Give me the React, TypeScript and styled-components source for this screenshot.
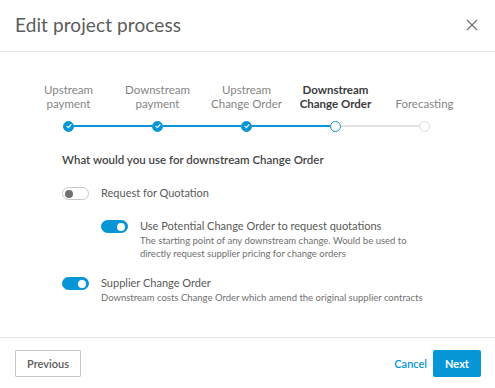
import React from "react";
import styled, { createGlobalStyle } from "styled-components";

const Global = createGlobalStyle`
  html, body { margin: 0; padding: 0; background: #fff; }
  body { font-family: Lato, "Noto Sans", sans-serif; color: #3c3c3c; }
  * { box-sizing: border-box; }
`;

const BLUE = "#0696d7";

const Dialog = styled.div`
  width: 495px;
  height: 388px;
  display: flex;
  flex-direction: column;
  background: #fff;
`;

const Header = styled.div`
  height: 52px;
  display: flex;
  align-items: center;
  justify-content: space-between;
  padding: 0 16px 2px 15px;
  border-bottom: 1px solid #e2e2e2;
`;

const Title = styled.h1`
  margin: 0;
  font-size: 19px;
  font-weight: 400;
  color: #5c5c5c;
  letter-spacing: 0.1px;
`;

const Close = styled.button`
  border: 0;
  background: none;
  padding: 0;
  width: 14px;
  height: 14px;
  display: flex;
  cursor: pointer;
`;

const Body = styled.div`
  flex: 1;
  padding: 31px 0 0 0;
`;

const Stepper = styled.div`
  display: grid;
  grid-template-columns: repeat(5, 89px);
  padding-left: 24px;
`;

const Step = styled.div`
  display: flex;
  flex-direction: column;
  align-items: center;
`;

const StepLabel = styled.div<{ $active?: boolean }>`
  font-size: 11.5px;
  line-height: 14px;
  text-align: center;
  height: 28px;
  display: flex;
  align-items: flex-end;
  color: ${(p) => (p.$active ? "#3c3c3c" : "#858585")};
  font-weight: ${(p) => (p.$active ? 700 : 400)};
`;

const Track = styled.div`
  margin-top: 9px;
  width: 100%;
  height: 12px;
  display: flex;
  align-items: center;
`;

const Half = styled.div<{ $color: string }>`
  flex: 1;
  height: 1.5px;
  background: ${(p) => p.$color};
`;

const Dot = styled.div<{ $state: "done" | "current" | "todo" }>`
  width: 11px;
  height: 11px;
  border-radius: 50%;
  flex: none;
  display: flex;
  align-items: center;
  justify-content: center;
  background: ${(p) => (p.$state === "done" ? BLUE : "#fff")};
  border: 1.5px solid
    ${(p) => (p.$state === "todo" ? "#dcdcdc" : BLUE)};
`;

const Question = styled.div`
  margin: 21px 0 0 62px;
  font-size: 11.5px;
  font-weight: 600;
  color: #454545;
`;

const Options = styled.div`
  margin-top: 20px;
  display: flex;
  flex-direction: column;
`;

const OptionRow = styled.div<{ $indent?: boolean; $gap?: number }>`
  display: flex;
  align-items: flex-start;
  gap: 12px;
  padding-left: ${(p) => (p.$indent ? 101 : 62)}px;
  margin-top: ${(p) => p.$gap ?? 0}px;
`;

const Toggle = styled.div<{ $on?: boolean }>`
  width: 27px;
  height: 13px;
  border-radius: 7px;
  flex: none;
  margin-top: 1px;
  display: flex;
  align-items: center;
  padding: 0 2px;
  justify-content: ${(p) => (p.$on ? "flex-end" : "flex-start")};
  background: ${(p) => (p.$on ? BLUE : "#fff")};
  border: 1px solid ${(p) => (p.$on ? BLUE : "#c8c8c8")};
  &::after {
    content: "";
    width: 8px;
    height: 8px;
    border-radius: 50%;
    background: ${(p) => (p.$on ? "#fff" : "#707070")};
  }
`;

const OptionText = styled.div`
  display: flex;
  flex-direction: column;
`;

const OptionLabel = styled.div`
  font-size: 11px;
  line-height: 14px;
  color: #5a5a5a;
`;

const OptionDesc = styled.div<{ $wide?: boolean }>`
  font-size: 9.5px;
  line-height: 13px;
  color: #707070;
  margin-top: 1px;
  max-width: ${(p) => (p.$wide ? "none" : "290px")};
`;

const Footer = styled.div`
  height: 51px;
  border-top: 1px solid #e2e2e2;
  display: flex;
  align-items: center;
  justify-content: space-between;
  padding: 0 14px 0 15px;
`;

const Right = styled.div`
  display: flex;
  align-items: center;
  gap: 6px;
`;

const OutlineButton = styled.button`
  height: 27px;
  width: 66px;
  padding: 0;
  border: 1px solid #c8c8c8;
  background: #fff;
  color: #5a5a5a;
  font-family: inherit;
  font-size: 11px;
  font-weight: 600;
  border-radius: 1px;
`;

const LinkButton = styled.button`
  border: 0;
  background: none;
  padding: 0;
  color: ${BLUE};
  font-family: inherit;
  font-size: 11px;
  font-weight: 600;
`;

const PrimaryButton = styled.button`
  height: 27px;
  width: 48px;
  padding: 0;
  border: 0;
  background: ${BLUE};
  color: #fff;
  font-family: inherit;
  font-size: 11px;
  font-weight: 700;
  border-radius: 2px;
`;

const steps: { label: [string, string]; state: "done" | "current" | "todo" }[] = [
  { label: ["Upstream", "payment"], state: "done" },
  { label: ["Downstream", "payment"], state: "done" },
  { label: ["Upstream", "Change Order"], state: "done" },
  { label: ["Downstream", "Change Order"], state: "current" },
  { label: ["", "Forecasting"], state: "todo" },
];

const Check = () => (
  <svg width="6" height="6" viewBox="0 0 6 6">
    <path d="M1 3.4 L2.4 4.6 L5 1.6" stroke="#fff" strokeWidth="1.2" fill="none" strokeLinecap="round" strokeLinejoin="round" />
  </svg>
);

export default function App() {
  return (
    <Dialog>
      <Global />
      <Header>
        <Title>Edit project process</Title>
        <Close aria-label="Close">
          <svg width="14" height="14" viewBox="0 0 14 14">
            <path d="M2 2 L12 12 M12 2 L2 12" stroke="#777" strokeWidth="1.3" />
          </svg>
        </Close>
      </Header>
      <Body>
        <Stepper>
          {steps.map((s, i) => {
            const leftColor = i === 0 ? "transparent" : s.state === "todo" ? "#e2e2e2" : BLUE;
            const next = steps[i + 1];
            const rightColor = !next ? "transparent" : next.state === "todo" ? "#e2e2e2" : BLUE;
            return (
              <Step key={i}>
                <StepLabel $active={s.state === "current"}>
                  {s.label[0] ? (
                    <span>
                      {s.label[0]}
                      <br />
                      {s.label[1]}
                    </span>
                  ) : (
                    <span>{s.label[1]}</span>
                  )}
                </StepLabel>
                <Track>
                  <Half $color={leftColor} />
                  <Dot $state={s.state}>{s.state === "done" && <Check />}</Dot>
                  <Half $color={rightColor} />
                </Track>
              </Step>
            );
          })}
        </Stepper>
        <Question>What would you use for downstream Change Order</Question>
        <Options>
          <OptionRow>
            <Toggle />
            <OptionText>
              <OptionLabel>Request for Quotation</OptionLabel>
            </OptionText>
          </OptionRow>
          <OptionRow $indent $gap={19}>
            <Toggle $on />
            <OptionText>
              <OptionLabel>Use Potential Change Order to request quotations</OptionLabel>
              <OptionDesc>
                The starting point of any downstream change. Would be used to directly request supplier
                pricing for change orders
              </OptionDesc>
            </OptionText>
          </OptionRow>
          <OptionRow $gap={16}>
            <Toggle $on />
            <OptionText>
              <OptionLabel>Supplier Change Order</OptionLabel>
              <OptionDesc $wide>
                Downstream costs Change Order which amend the original supplier contracts
              </OptionDesc>
            </OptionText>
          </OptionRow>
        </Options>
      </Body>
      <Footer>
        <OutlineButton>Previous</OutlineButton>
        <Right>
          <LinkButton>Cancel</LinkButton>
          <PrimaryButton>Next</PrimaryButton>
        </Right>
      </Footer>
    </Dialog>
  );
}
